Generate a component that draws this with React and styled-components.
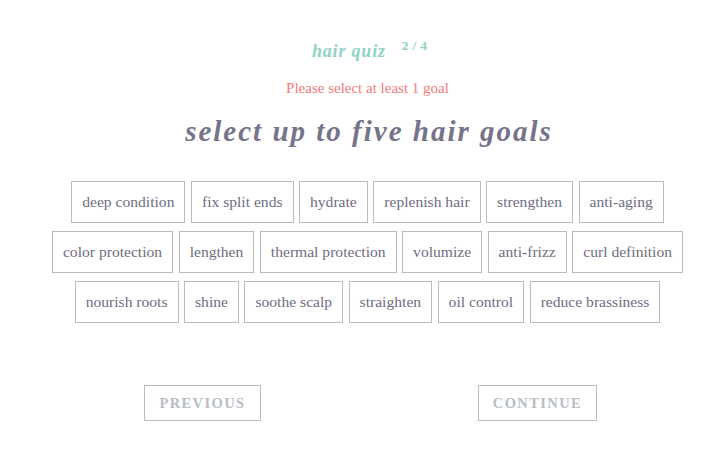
import React from "react";
import styled, { createGlobalStyle } from "styled-components";

const Global = createGlobalStyle`
  html, body { margin: 0; padding: 0; background: #fff; }
  body { font-family: "Liberation Serif", "Times New Roman", serif; }
`;

const Page = styled.div`
  width: 727px;
  box-sizing: border-box;
  padding: 38px 0 0 8px;
  display: flex;
  flex-direction: column;
  align-items: center;
`;

const QuizTitle = styled.div`
  display: flex;
  align-items: flex-start;
  gap: 16px;
  color: #8fd2c6;
  font-weight: bold;
  margin-left: 4px;
`;

const QuizName = styled.span`
  font-style: italic;
  font-size: 18px;
  letter-spacing: 0.8px;
  margin-top: 3px;
`;

const Step = styled.span`
  font-size: 13.5px;
  letter-spacing: 4px;
  margin-right: -4px;
`;

const Warning = styled.div`
  color: #f27b7b;
  font-size: 15px;
  margin-top: 18px;
`;

const Heading = styled.h1`
  margin: 18px 0 0 3px;
  font-size: 29px;
  font-style: italic;
  font-weight: bold;
  letter-spacing: 2px;
  color: #76748a;
`;

const Goals = styled.div`
  margin-top: 33px;
  width: 690px;
  display: flex;
  flex-wrap: wrap;
  justify-content: center;
  row-gap: 8px;
  column-gap: 5.5px;
`;

const Goal = styled.button`
  height: 42px;
  padding: 0 10px;
  border: 1px solid #bcbcbc;
  background: #fff;
  font-family: inherit;
  font-size: 15.6px;
  color: #6f6d82;
  cursor: pointer;
`;

const Nav = styled.div`
  margin: 62px 0 0 6px;
  width: 453px;
  display: flex;
  justify-content: space-between;
`;

const NavButton = styled.button`
  height: 36px;
  width: ${(p) => p.$w}px;
  border: 1px solid #bcbcbc;
  background: #fff;
  font-family: inherit;
  font-weight: bold;
  font-size: 14.5px;
  letter-spacing: 1.4px;
  color: #b9bdc5;
  text-transform: uppercase;
  cursor: pointer;
`;

const goals = [
  "deep condition",
  "fix split ends",
  "hydrate",
  "replenish hair",
  "strengthen",
  "anti-aging",
  "color protection",
  "lengthen",
  "thermal protection",
  "volumize",
  "anti-frizz",
  "curl definition",
  "nourish roots",
  "shine",
  "soothe scalp",
  "straighten",
  "oil control",
  "reduce brassiness",
];

export default function App() {
  return (
    <>
      <Global />
      <Page>
        <QuizTitle>
          <QuizName>hair quiz</QuizName>
          <Step>2/4</Step>
        </QuizTitle>
        <Warning>Please select at least 1 goal</Warning>
        <Heading>select up to five hair goals</Heading>
        <Goals>
          {goals.map((g) => (
            <Goal key={g}>{g}</Goal>
          ))}
        </Goals>
        <Nav>
          <NavButton $w={117}>Previous</NavButton>
          <NavButton $w={119}>Continue</NavButton>
        </Nav>
      </Page>
    </>
  );
}
